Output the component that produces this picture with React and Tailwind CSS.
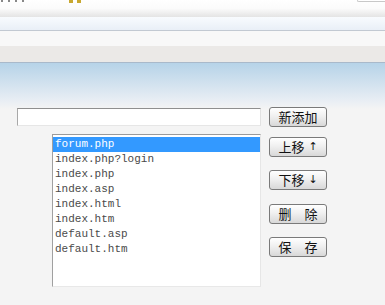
const ITEMS = ["forum.php", "index.php?login", "index.php", "index.asp", "index.html", "index.htm", "default.asp", "default.htm"];

function Btn({ children, className = "" }) {
  return (
    <button
      className={`w-[58px] h-[20px] rounded-[3px] border border-[#7a7a7a] bg-[linear-gradient(#ffffff,#f0f0f0_45%,#d8d8d8)] text-[13px] leading-[18px] font-normal text-[#111] font-['Noto_Sans_CJK_SC',sans-serif] flex items-center justify-center ${className}`}
    >
      {children}
    </button>
  );
}

function Arrow({ up }) {
  return <span className="ml-[4px] font-['DejaVu_Sans',sans-serif] text-[11px] leading-[18px]">{up ? "↑" : "↓"}</span>;
}

export default function App() {
  const selected = 0;
  return (
    <div className="w-[385px] h-[305px] overflow-hidden bg-[#f4f4f4] font-['Liberation_Sans',sans-serif]">
      {/* browser chrome, cut off at the top */}
      <div className="h-[17px] bg-[linear-gradient(#ffffff,#fbfbfb_50%,#e4e4e4)] flex items-start">
        <div className="flex gap-[5px] pl-[1px]">
          <span className="w-[2px] h-[2px] bg-[#888]" />
          <span className="w-[2px] h-[2px] bg-[#888]" />
          <span className="w-[2px] h-[2px] bg-[#888]" />
          <span className="w-[2px] h-[2px] bg-[#888]" />
        </div>
        <div className="ml-[45px] flex gap-[4px]">
          <span className="w-[4px] h-[3px] bg-[#c8a830]" />
          <span className="w-[4px] h-[3px] bg-[#c8a830]" />
        </div>
        <div className="ml-auto mr-[-4px] w-[32px] h-[2px] border-b border-l border-[#c8c8c8] rounded-bl-[3px] bg-white" />
      </div>
      <div className="h-[13px] bg-[linear-gradient(#f8fbfe,#e9eff7)]" />
      <div className="h-px bg-[#c2c9d2]" />
      <div className="h-[15px] bg-[#f8f8f8]" />
      <div className="h-[16px] bg-[#ebe9e7]" />
      <div className="h-px bg-[#a9b9ca]" />

      <div className="h-[242px] bg-[linear-gradient(#b6d3e8,#e9eef4_38px,#f4f4f4_46px)] flex pl-[17px] pt-[45px]">
        <div className="w-[244px]">
          <input
            type="text"
            className="block w-full h-[18px] bg-white border border-t-[#8f8f8f] border-l-[#a8a8a8] border-r-[#e2e2e2] border-b-[#e6e6e6] outline-none"
          />
          <div className="ml-[35px] mt-[8px] w-[209px] h-[153px] bg-white border border-t-[#9a9a9a] border-l-[#a0a0a0] border-r-[#e6e6e6] border-b-[#e8e8e8] pt-[2px] font-['Liberation_Mono',monospace] text-[11px]">
            {ITEMS.map((it, i) => (
              <div
                key={it}
                className={`h-[15px] leading-[15px] pl-[2px] whitespace-pre ${i === selected ? "bg-[#3399ff] text-white" : "text-[#4a4a4a]"}`}
              >
                {it}
              </div>
            ))}
          </div>
        </div>
        <div className="ml-[8px] flex flex-col mt-[-1px]">
          <Btn>新添加</Btn>
          <Btn className="mt-[10px]">上移<Arrow up /></Btn>
          <Btn className="mt-[13px]">下移<Arrow /></Btn>
          <Btn className="mt-[14px]">删　除</Btn>
          <Btn className="mt-[13px]">保　存</Btn>
        </div>
      </div>
    </div>
  );
}
